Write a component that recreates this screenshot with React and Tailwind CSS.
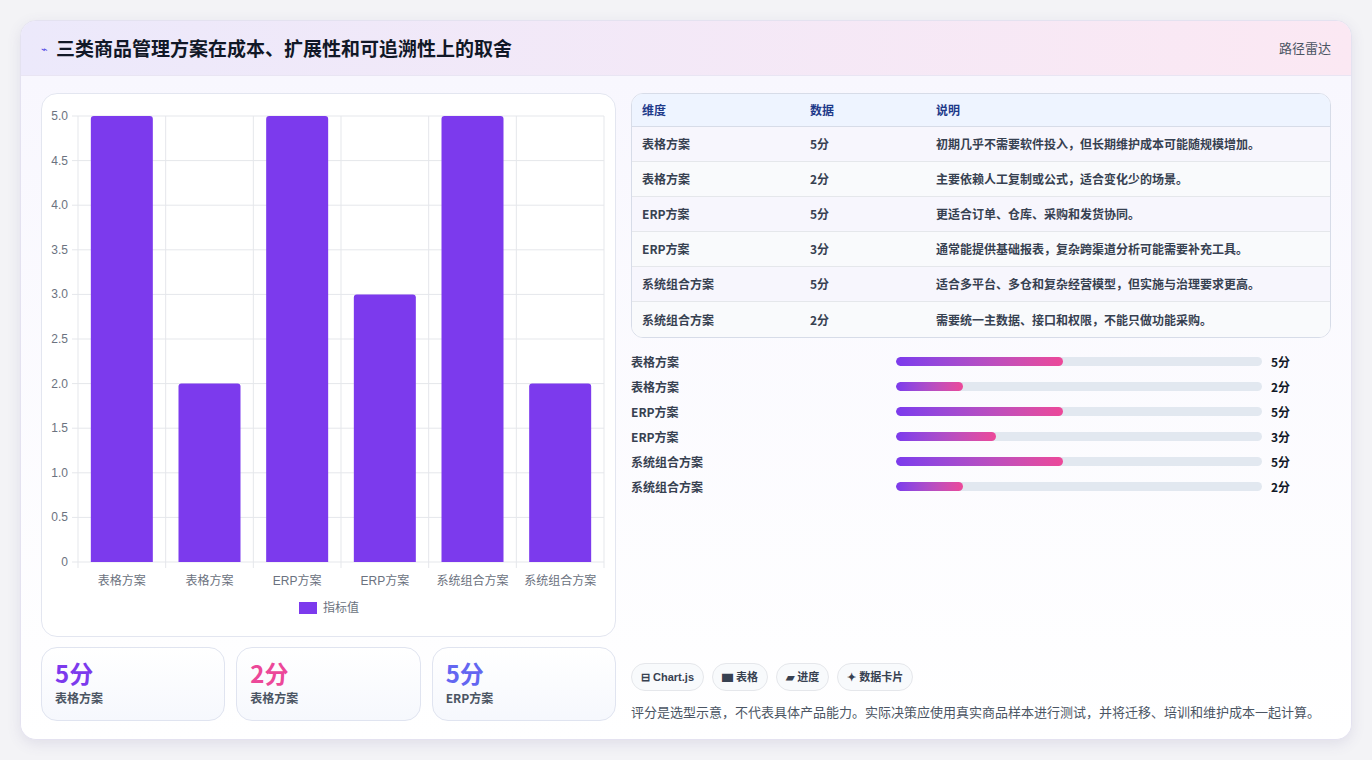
import React from "react";

const rows = [
  ["表格方案", 5, "初期几乎不需要软件投入，但长期维护成本可能随规模增加。"],
  ["表格方案", 2, "主要依赖人工复制或公式，适合变化少的场景。"],
  ["ERP方案", 5, "更适合订单、仓库、采购和发货协同。"],
  ["ERP方案", 3, "通常能提供基础报表，复杂跨渠道分析可能需要补充工具。"],
  ["系统组合方案", 5, "适合多平台、多仓和复杂经营模型，但实施与治理要求更高。"],
  ["系统组合方案", 2, "需要统一主数据、接口和权限，不能只做功能采购。"],
];

function Chart() {
  const x0 = 36, x1 = 562, yTop = 22, yBot = 468;
  const cw = (x1 - x0) / 6;
  const unit = (yBot - yTop) / 5;
  const ticks = ["0", "0.5", "1.0", "1.5", "2.0", "2.5", "3.0", "3.5", "4.0", "4.5", "5.0"];
  return (
    <svg width="573" height="541" className="block" style={{ fontFamily: "'Liberation Sans','Noto Sans CJK SC',sans-serif" }}>
      {ticks.map((t, i) => {
        const y = yBot - i * unit / 2;
        return (
          <g key={t}>
            <line x1={x0 - 6} x2={x1} y1={y} y2={y} stroke="#e5e7eb" />
            <text x={x0 - 10} y={y + 4} fontSize="12" fill="#6b7280" textAnchor="end">{t}</text>
          </g>
        );
      })}
      {Array.from({ length: 7 }).map((_, i) => (
        <line key={i} x1={x0 + i * cw} x2={x0 + i * cw} y1={yTop} y2={yBot + 6} stroke="#e5e7eb" />
      ))}
      {rows.map((r, i) => {
        const h = r[1] * unit;
        const cx = x0 + i * cw + cw / 2;
        return (
          <g key={i}>
            <path d={`M${cx - 31} ${yBot} V${yBot - h + 3} Q${cx - 31} ${yBot - h} ${cx - 28} ${yBot - h} H${cx + 28} Q${cx + 31} ${yBot - h} ${cx + 31} ${yBot - h + 3} V${yBot} Z`} fill="#7c3aed" />
            <text x={cx} y={yBot + 23} fontSize="12" fill="#6b7280" textAnchor="middle">{r[0]}</text>
          </g>
        );
      })}
      <rect x="257" y="508" width="18" height="12" fill="#7c3aed" />
      <text x="281" y="518" fontSize="12" fill="#6b7280">指标值</text>
    </svg>
  );
}

export default function App() {
  return (
    <div className="min-h-[760px] bg-[#f3f3f6] p-5" style={{ fontFamily: "'Noto Sans CJK SC','Liberation Sans',sans-serif" }}>
      <div className="rounded-2xl bg-[#fcfbff] border border-[#e4e2f0] shadow-[0_4px_14px_rgba(90,80,140,0.12)] overflow-hidden h-[720px] flex flex-col">
        <div className="h-[55px] flex items-center justify-between px-5 bg-gradient-to-r from-[#ece9fb] to-[#fbe8f3] border-b border-[#e9e5f3]">
          <div className="flex items-center gap-2">
            <span className="text-[#4f46e5] text-[11px]">⌁</span>
            <span className="text-[19px] font-bold text-[#111827]">三类商品管理方案在成本、扩展性和可追溯性上的取舍</span>
          </div>
          <span className="text-[13px] text-[#4b5563]">路径雷达</span>
        </div>
        <div className="flex-1 flex gap-[15px] px-5 pt-[17px] pb-[18px] bg-gradient-to-b from-[#f8f7fe] to-white">
          <div className="w-[575px] flex flex-col gap-[10px]">
            <div className="h-[544px] rounded-2xl border border-[#e3e6f0] bg-white overflow-hidden">
              <Chart />
            </div>
            <div className="flex gap-[11px]">
              {[["5分", "text-[#7c3aed]", "表格方案"], ["2分", "text-[#ec4899]", "表格方案"], ["5分", "text-[#6366f1]", "ERP方案"]].map(([v, c, l], i) => (
                <div key={i} className="flex-1 h-[74px] rounded-2xl border border-[#e0e4f0] bg-gradient-to-b from-white to-[#f6f8fd] px-[13px] pt-[10px]">
                  <div className={`text-[24px] font-bold leading-[30px] ${c}`}>{v}</div>
                  <div className="text-[12px] font-bold text-[#4b5563] leading-[16px] mt-[2px]">{l}</div>
                </div>
              ))}
            </div>
          </div>
          <div className="flex-1 flex flex-col">
            <div className="rounded-xl border border-[#d7dce8] overflow-hidden bg-white">
              <div className="flex h-[33px] items-center bg-[#eef4ff] border-b border-[#d7dce8] text-[12px] font-bold text-[#1e3a8a]">
                <div className="w-[178px] pl-[10px]">维度</div>
                <div className="w-[126px]">数据</div>
                <div>说明</div>
              </div>
              {rows.map((r, i) => (
                <div key={i} className={`flex h-[35px] items-center text-[12px] font-bold text-[#374151] ${i < 5 ? "border-b border-[#e5e7eb]" : ""} ${i % 2 === 0 ? "bg-[#f7f6fd]" : "bg-[#f9fafc]"}`}>
                  <div className="w-[178px] pl-[10px]">{r[0]}</div>
                  <div className="w-[126px]">{r[1]}分</div>
                  <div>{r[2]}</div>
                </div>
              ))}
            </div>
            <div className="mt-[11px] flex flex-col">
              {rows.map((r, i) => (
                <div key={i} className="flex items-center h-[25px] text-[12px] font-bold text-[#374151]">
                  <div className="w-[265px]">{r[0]}</div>
                  <div className="w-[366px] h-[9px] rounded-full bg-[#e2e8f0] overflow-hidden">
                    <div className="h-full rounded-full bg-gradient-to-r from-[#7c3aed] to-[#ec4899]" style={{ width: r[1] * 33.3 }} />
                  </div>
                  <div className="ml-[9px] text-[#111827]">{r[1]}分</div>
                </div>
              ))}
            </div>
            <div className="flex-1" />
            <div className="flex gap-2 mb-[12px]">
              {["⊟ Chart.js", "▆ 表格", "▰ 进度", "✦ 数据卡片"].map((t) => (
                <span key={t} className="h-[28px] px-[9px] flex items-center rounded-full border border-[#e5e7eb] bg-[#f8fafc] text-[11px] font-bold text-[#374151]" style={{ fontFamily: "'Liberation Sans','Noto Sans CJK SC',sans-serif" }}>{t}</span>
              ))}
            </div>
            <div className="text-[13px] text-[#4b5563] leading-[18px]">评分是选型示意，不代表具体产品能力。实际决策应使用真实商品样本进行测试，并将迁移、培训和维护成本一起计算。</div>
          </div>
        </div>
      </div>
    </div>
  );
}
